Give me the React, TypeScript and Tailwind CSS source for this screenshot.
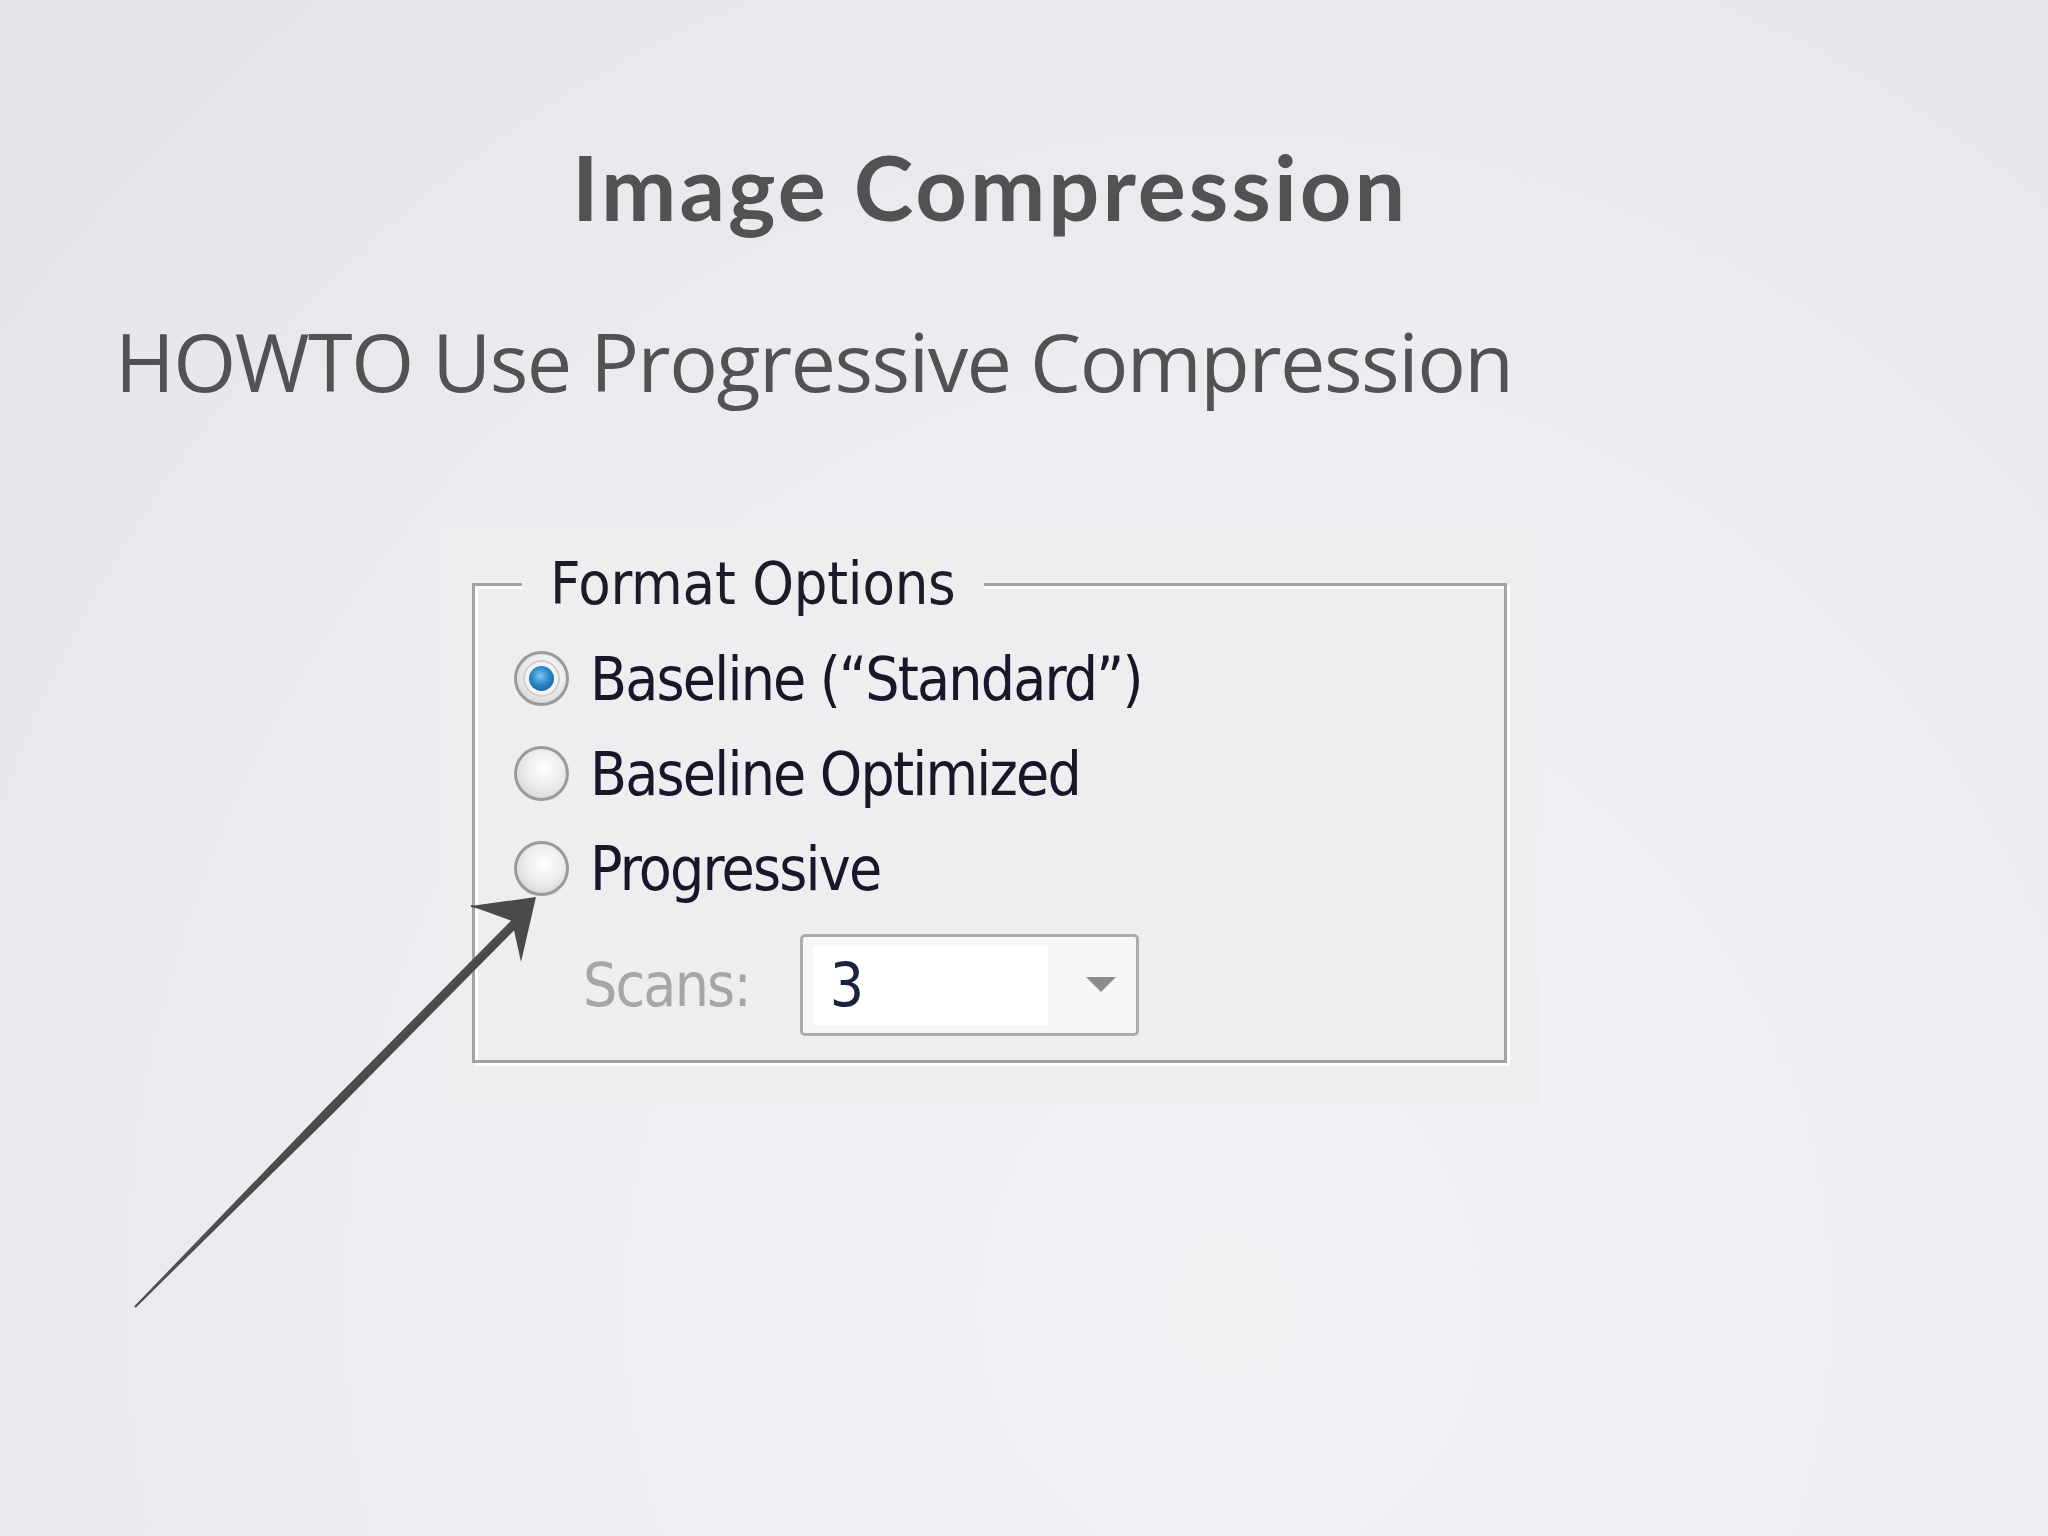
import React from 'react';

const dialogFont = { fontFamily: '"DejaVu Sans Condensed", "DejaVu Sans", sans-serif' };

const Radio: React.FC<{ checked?: boolean }> = ({ checked }) => (
  <span className="relative flex h-[55px] w-[55px] shrink-0 items-center justify-center rounded-full border-[3px] border-[#9a9a9a] bg-[radial-gradient(circle_at_55%_40%,#ffffff_0%,#eeeeee_45%,#c9c9c9_100%)]">
    {checked && (
      <span className="flex h-[37px] w-[37px] items-center justify-center rounded-full bg-[#f4f4f4] shadow-[inset_0_0_0_2px_#cfcfcf]">
        <span className="h-[25px] w-[25px] rounded-full bg-[radial-gradient(circle_at_45%_40%,#7cc6f2_0%,#2a86c8_45%,#134f82_100%)]" />
      </span>
    )}
  </span>
);

const options = [
  { label: 'Baseline (“Standard”)', checked: true },
  { label: 'Baseline Optimized', checked: false },
  { label: 'Progressive', checked: false },
];

export default function App() {
  return (
    <div className="relative h-[1536px] w-[2048px] overflow-hidden bg-[radial-gradient(ellipse_at_60%_85%,#f3f3f6_0%,#eceef1_45%,#e2e4e9_100%)]">
      {/* Title */}
      <div className="flex pl-[572px] pt-[141px]">
        <h1
          className="text-[90px] font-bold leading-none tracking-[3px] text-[#525252]"
          style={{ fontFamily: 'Lato, "Liberation Sans", sans-serif' }}
        >
          Image Compression
        </h1>
      </div>

      {/* Subtitle */}
      <div className="pl-[115px] pt-[89px]">
        <h2
          className="text-[81px] leading-none tracking-[-1.5px] text-[#525252]"
          style={{ fontFamily: '"Open Sans", sans-serif' }}
        >
          HOWTO Use Progressive Compression
        </h2>
      </div>

      {/* Screenshot of dialog */}
      <div className="ml-[441px] mt-[128px] w-[1097px] bg-[#eeedef] px-[31px] pb-[40px] pt-[25px]" style={dialogFont}>
        <fieldset className="h-[509px] border-[3px] border-[#a3a3a3] pl-[39px] shadow-[3px_3px_0_#ffffff,inset_3px_3px_0_#ffffff]">
          <legend className="ml-[8px] bg-[#eeedef] px-[28px] text-[59px] leading-[60px] tracking-[-0.2px] text-[#1b1b2a]">
            Format Options
          </legend>
          <div className="flex flex-col gap-[40px] pt-[37px]">
            {options.map((opt, i) => (
              <div key={i} className="flex h-[55px] items-center gap-[21px]">
                <Radio checked={opt.checked} />
                <span className="text-[60px] leading-none tracking-[-1.8px] text-[#17172a]">{opt.label}</span>
              </div>
            ))}
          </div>
          <div className="mt-[38px] flex items-center gap-[50px] pl-[69px]">
            <span className="text-[60px] leading-none tracking-[-1.8px] text-[#a6a6a6]">Scans:</span>
            <div className="flex h-[102px] w-[339px] items-center rounded-[5px] border-[3px] border-[#acacac] bg-[#f7f7f7] pl-[10px] pr-[20px]">
              <div className="flex h-[79px] w-[235px] items-center bg-white pl-[17px] text-[60px] leading-none text-[#1b2340]">
                3
              </div>
              <svg className="ml-auto" width="30" height="16" viewBox="0 0 30 16">
                <polygon points="0,0 30,0 15,15" fill="#8c8c8c" />
              </svg>
            </div>
          </div>
        </fieldset>
      </div>

      {/* Hand-drawn arrow pointing at the Progressive radio */}
      <svg className="pointer-events-none absolute left-0 top-0" width="2048" height="1536" viewBox="0 0 2048 1536">
        <polygon
          points="134.3,1306.3 324.3,1109.3 516.8,914.8 523.2,921.2 330.7,1115.7 135.7,1307.7"
          fill="#4a4a4a"
        />
        <line x1="150" y1="1292" x2="512" y2="922" stroke="#5a5a5a" strokeWidth="1.5" opacity="0.5" />
        <polygon points="536,897 471,906 512,921 521,962" fill="#4a4a4a" />
        <line x1="471" y1="906" x2="520" y2="916" stroke="#4a4a4a" strokeWidth="2" />
      </svg>
    </div>
  );
}
